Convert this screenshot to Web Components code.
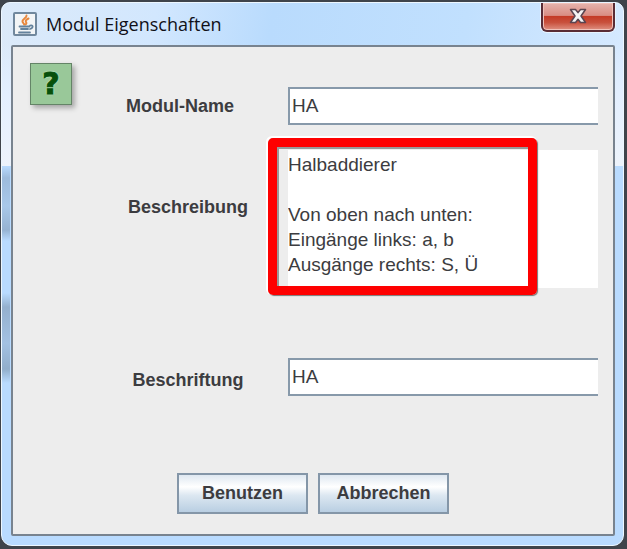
<!DOCTYPE html>
<html lang="de">
<head>
<meta charset="utf-8">
<title>Modul Eigenschaften</title>
<style>
  body {
    margin: 0;
    background: #3f444b;
    color: #3c3c40;
    font-family: "Liberation Sans", Arial, sans-serif;
    font-size: 19px;
  }
</style>
</head>
<body>
<dialog-window>
  <java-icon slot="icon"></java-icon>
  <span slot="title">Modul Eigenschaften</span>
  <help-badge></help-badge>
  <module-form>
    <form-row label="Modul-Name" value="HA" class="name"></form-row>
    <form-row label="Beschreibung" multiline class="description" value="Halbaddierer

Von oben nach unten:
Eingänge links: a, b
Ausgänge rechts: S, Ü"></form-row>
    <form-row label="Beschriftung" value="HA" class="caption"></form-row>
  </module-form>
  <metal-button slot="actions">Benutzen</metal-button>
  <metal-button slot="actions">Abbrechen</metal-button>
</dialog-window>

<script>
class BaseElement extends HTMLElement {
  constructor() {
    super();
    this.attachShadow({ mode: 'open' });
  }

  connectedCallback() {
    const template = document.createElement('template');
    template.innerHTML = this.getStyles() + this.getTemplate();
    this.shadowRoot.replaceChildren(template.content.cloneNode(true));
  }
}

class DialogWindow extends BaseElement {
  getTemplate() {
    return `
      <header>
        <slot name="icon"></slot>
        <h1><slot name="title"></slot></h1>
        <button type="button" aria-label="Schließen">
          <svg width="18" height="16" viewBox="0 0 18 16">
            <path d="M1.5 1.5h5L9 4.6l2.500-3.100h5L12 8l4.500 6.500h-5L9 11.300 6.500 14.500h-5L6 8z"
              fill="#f4f4f4" stroke="#5a4550" stroke-width="1.500" stroke-linejoin="round"/>
          </svg>
        </button>
      </header>
      <main>
        <div class="content"><slot></slot></div>
        <footer><slot name="actions"></slot></footer>
      </main>
    `;
  }

  getStyles() {
    return `
      <style>
        :host {
          --glass: #b9dbff;
          display: flex;
          flex-direction: column;
          box-sizing: border-box;
          min-height: calc(100vh - 5px);
          margin: 2px 3px 3px 1px;
          padding: 0 8px 9px 9px;
          border: 1px solid #edf7ff;
          border-radius: 9px 9px 11px 11px;
          background:
            linear-gradient(transparent, #9dbbdc 12px, #a8c8e9 40px, #96b3d2 64px, transparent) 0 163px / 8px 75px no-repeat,
            linear-gradient(transparent, #94b0ce 14px, #a3c1e2 50px, #91aecb 76px, transparent) 0 290px / 8px 90px no-repeat,
            linear-gradient(#d9eaff00 40px, #e3efff 90px, #edf3fb 163px, transparent 163px) no-repeat,
            linear-gradient(100deg, #dceaf9, #d2e7fe 24%, #b9dbfd 42%, #c1e0fe 72%, #d8eaff) 0 0 / 100% 163px no-repeat,
            var(--glass);
        }
        header {
          display: flex;
          align-items: center;
          gap: 9px;
          height: 42px;
          padding-left: 2px;
        }
        h1 {
          flex: 1;
          margin: 0;
          color: #101018;
          font: 18px/24px "Open Sans", "Noto Sans", sans-serif;
        }
        button {
          display: grid;
          place-items: center;
          align-self: flex-start;
          width: 74px;
          height: 29px;
          padding: 0 0 2px;
          border: 2px solid #592c35;
          border-top: 0;
          border-radius: 0 0 6px 6px;
          background: linear-gradient(#e5b4ae, #d98d83 46%, #c43b27 50%, #c8503c 72%, #df9182);
          box-shadow: inset 0 0 0 1px #f0c1b9, 0 0 0 1px #e8f4ff;
        }
        main {
          display: flex;
          flex: 1;
          flex-direction: column;
          border: 2px solid #78838f;
          border-radius: 2px;
          background: #ededed;
        }
        .content {
          display: flex;
          align-items: flex-start;
          gap: 54px;
          flex: 1;
          padding: 16px 15px 0 17px;
        }
        footer {
          display: flex;
          justify-content: center;
          gap: 10px;
          padding: 0 0 20px;
        }
      </style>
    `;
  }
}

class JavaIcon extends BaseElement {
  getTemplate() {
    return `
      <svg width="24" height="24" viewBox="0 0 24 24" fill="none" stroke-linecap="round">
        <rect x="1" y="1" width="22" height="22" rx="1" fill="#f3f5f6" stroke="#71889d" stroke-width="2"/>
        <path d="M13.500 3.500c.5 2.500-4.500 3.500-4 6 .2 1.400 1.500 1.700 1.700 3M15.500 6.500c-2 1-3.500 2-2.500 3.500.8 1.200.3 2-.8 2.500"
          stroke="#e8873c" stroke-width="2"/>
        <path d="M6.500 14.500h10M8 17h7M6 20.500h11M17 13.500c3.500-1 3.500 2.500 0 3.500" stroke="#64829c" stroke-width="1.800"/>
      </svg>
    `;
  }

  getStyles() {
    return `
      <style>
        :host { display: block; height: 24px; }
      </style>
    `;
  }
}

class HelpBadge extends BaseElement {
  getTemplate() {
    return `<button type="button">?</button>`;
  }

  getStyles() {
    return `
      <style>
        :host { display: block; }
        button {
          width: 42px;
          height: 42px;
          padding: 0;
          border: 1px solid #648467;
          background: #99c899;
          box-shadow: 3px 3px 5px #0000004d;
          color: #07500b;
          font: bold 30px/38px "DejaVu Sans", sans-serif;
          -webkit-text-stroke: 1px #07500b;
          text-shadow: 0 0 2px #d3ffcf, 0 0 2px #d3ffcf;
        }
      </style>
    `;
  }
}

class ModuleForm extends BaseElement {
  getTemplate() {
    return `<slot></slot>`;
  }

  getStyles() {
    return `
      <style>
        :host {
          display: flex;
          flex: 1;
          flex-direction: column;
          min-width: 0;
          padding-top: 24px;
        }
        ::slotted(.description) {
          --label-align: center;
          --field-align: end;
          --row-height: 163px;
        }
        ::slotted(.caption) {
          --label-align: center;
          --field-align: start;
          --row-height: 44px;
          margin-top: 70px;
        }
      </style>
    `;
  }
}

class FormRow extends BaseElement {
  getTemplate() {
    const label = this.getAttribute('label');
    const value = this.getAttribute('value');
    const field = this.hasAttribute('multiline')
      ? `<call-out><textarea id="field" spellcheck="false">${value}</textarea></call-out>`
      : `<input id="field" type="text" value="${value}">`;

    return `<label for="field">${label}</label>${field}`;
  }

  getStyles() {
    return `
      <style>
        :host {
          display: grid;
          grid-template-columns: 124px minmax(0, 1fr);
          column-gap: 38px;
          align-items: center;
          min-height: var(--row-height, 38px);
        }
        label {
          justify-self: var(--label-align, start);
          font-size: 18px;
          font-weight: bold;
          line-height: 24px;
        }
        input, call-out {
          align-self: var(--field-align, center);
        }
        input, textarea {
          display: block;
          box-sizing: border-box;
          width: 100%;
          margin: 0;
          border: 0;
          border-radius: 0;
          outline: 0;
          background: #fff;
          color: inherit;
          font: inherit;
        }
        input {
          height: 38px;
          padding: 0 2px;
          border: 2px solid #8799aa;
          border-right: 0;
        }
        textarea {
          height: 138px;
          padding: 2px 0;
          line-height: 25px;
          overflow: hidden;
          resize: none;
        }
      </style>
    `;
  }
}

/* Red marker frame drawn over the slotted field */
class CallOut extends BaseElement {
  getTemplate() {
    return `<slot></slot><div class="frame"></div>`;
  }

  getStyles() {
    return `
      <style>
        :host { display: block; position: relative; }
        .frame {
          position: absolute;
          inset: -12px auto auto -20px;
          box-sizing: border-box;
          width: 269px;
          height: 157px;
          border: 9px solid #fe0000;
          border-radius: 5px;
          box-shadow: 1px 1px 1px #777, -1px -1px 0 1px #fff, inset 2px 2px 0 #999;
          pointer-events: none;
        }
      </style>
    `;
  }
}

class MetalButton extends BaseElement {
  getTemplate() {
    return `<button type="button"><slot></slot></button>`;
  }

  getStyles() {
    return `
      <style>
        :host { display: block; }
        button {
          width: 131px;
          height: 41px;
          padding: 0;
          border: 2px solid #8496a8;
          background: linear-gradient(#dfe8f1, #fff 32%, #dce7f1 55%, #b9cee2);
          color: inherit;
          font: inherit;
          font-size: 18px;
          font-weight: bold;
        }
      </style>
    `;
  }
}

customElements.define('dialog-window', DialogWindow);
customElements.define('java-icon', JavaIcon);
customElements.define('help-badge', HelpBadge);
customElements.define('module-form', ModuleForm);
customElements.define('call-out', CallOut);
customElements.define('form-row', FormRow);
customElements.define('metal-button', MetalButton);
</script>
</body>
</html>
